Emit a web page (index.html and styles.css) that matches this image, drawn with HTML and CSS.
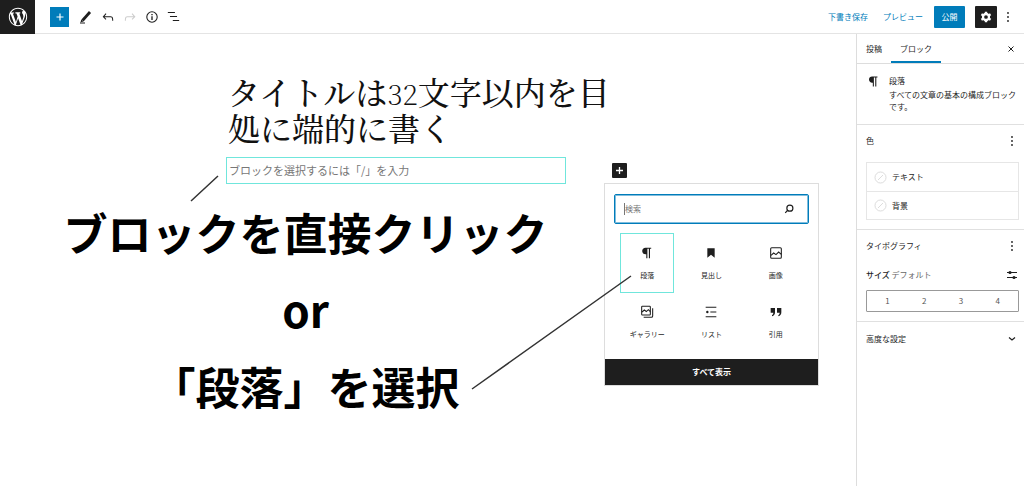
FILE: index.html
```html
<!DOCTYPE html>
<html lang="ja">
<head>
<meta charset="utf-8">
<title>投稿を編集</title>
<link rel="stylesheet" href="styles.css">
</head>
<body>
<header class="topbar">
  <a class="logo" href="#" aria-label="WordPress">
    <svg viewBox="-2 -2 24 24" width="22" height="22" fill="#fff"><path d="M20 10c0-5.51-4.49-10-10-10C4.48 0 0 4.49 0 10c0 5.52 4.48 10 10 10 5.51 0 10-4.48 10-10zM7.78 15.37L4.37 6.22c.55-.02 1.17-.08 1.17-.08.5-.06.44-1.13-.06-1.11 0 0-1.45.11-2.37.11-.18 0-.37 0-.58-.01C4.12 2.69 6.87 1.11 10 1.11c2.33 0 4.45.87 6.05 2.34-.68-.11-1.65.39-1.65 1.58 0 .74.45 1.36.9 2.1.35.61.55 1.36.55 2.46 0 1.49-1.4 5-1.4 5l-3.03-8.37c.54-.02.82-.17.82-.17.5-.05.44-1.25-.06-1.22 0 0-1.44.12-2.38.12-.87 0-2.33-.12-2.33-.12-.5-.03-.56 1.2-.06 1.22l.92.08 1.26 3.41zM17.41 10c.24-.64.74-1.87.43-4.25.7 1.29 1.05 2.71 1.05 4.25 0 3.29-1.73 6.24-4.4 7.78.97-2.59 1.94-5.2 2.92-7.78zM6.1 18.09C3.12 16.65 1.11 13.53 1.11 10c0-1.3.23-2.48.72-3.59C3.25 10.3 4.67 14.2 6.1 18.09zm4.03-6.63l2.58 6.98c-.86.29-1.76.45-2.71.45-.79 0-1.57-.11-2.29-.33.81-2.38 1.62-4.74 2.42-7.1z"/></svg>
  </a>
  <div class="tools">
    <button class="icon-btn primary" aria-label="ブロックを追加"><svg viewBox="0 0 24 24" width="14" height="14"><path d="M12 6v12M6 12h12" stroke="#fff" stroke-width="2"/></svg></button>
    <button class="icon-btn" aria-label="編集"><svg viewBox="0 0 16 16" width="16" height="16"><path d="M4.500 11.500L12 3" stroke="currentColor" stroke-width="2.800"/><path d="M3.300 10.500l2.200 2-3 .8zM2 13.600h5v1H2z"/></svg></button>
    <button class="icon-btn" aria-label="元に戻す"><svg viewBox="0 0 24 24" width="16" height="16"><path d="M18.3 11.700c-.6-.6-1.400-.9-2.300-.9H6.700l2.900-3.300-1.100-1-4.500 5L8.500 16l1-1-2.700-2.700H16c.5 0 .9.200 1.300.5 1 1 1 3.400 1 4.500v.3h1.500v-.2c0-1.500 0-4.300-1.500-5.700z"/></svg></button>
    <button class="icon-btn faded" aria-label="やり直す" disabled><svg viewBox="0 0 24 24" width="16" height="16"><path d="M15.600 6.500l-1.100 1 2.900 3.300H8c-.9 0-1.700.3-2.300.9-1.400 1.500-1.400 4.200-1.400 5.600v.2h1.500v-.3c0-1.100 0-3.500 1-4.500.3-.3.7-.5 1.300-.5h9.200L14.500 15l1.100 1.100 4.600-4.600-4.600-5z"/></svg></button>
    <button class="icon-btn" aria-label="詳細"><svg viewBox="0 0 24 24" width="16" height="16"><circle cx="12" cy="12" r="7.800" fill="none" stroke="currentColor" stroke-width="1.600"/><path d="M11 11h2v5.500h-2zM11 7.500h2v2h-2z"/></svg></button>
    <button class="icon-btn" aria-label="リスト表示"><svg viewBox="0 0 24 24" width="17" height="17"><path d="M4 5.500h10V7H4zM7 11.200h10v1.500H7zM11 17h9v1.500h-9z"/></svg></button>
  </div>
  <div class="actions">
    <button class="text-btn">下書き保存</button>
    <button class="text-btn">プレビュー</button>
    <button class="publish">公開</button>
    <button class="icon-btn dark" aria-label="設定"><svg viewBox="0 0 24 24" width="16" height="16"><circle cx="12" cy="12" r="4.500" fill="none" stroke="#fff" stroke-width="3.400"/><path d="M12 4v3M12 17v3M5.100 8l2.600 1.500M16.300 14.500l2.600 1.500M5.100 16l2.600-1.500M16.300 9.500L18.900 8" stroke="#fff" stroke-width="3.600"/></svg></button>
    <button class="more" aria-label="オプション"><svg viewBox="0 0 4 12" width="4" height="12"><circle cx="2" cy="2" r=".9"/><circle cx="2" cy="6" r=".9"/><circle cx="2" cy="10" r=".9"/></svg></button>
  </div>
</header>
<div class="workspace">
  <main class="canvas">
    <div class="writing">
      <h1 class="post-title">タイトルは<span class="figures">32</span>文字以内を目処に端的に書く</h1>
      <div class="block-row">
        <input class="paragraph" type="text" aria-label="段落ブロック" placeholder="ブロックを選択するには「/」を入力">
        <button class="appender" aria-label="ブロックを追加"><svg viewBox="0 0 15 15" width="15" height="15"><path d="M7.500 4v7M4 7.500h7" stroke="#fff" stroke-width="1.300"/></svg></button>
        <section class="inserter" aria-label="ブロック一覧">
          <div class="search">
            <input type="search" aria-label="検索" placeholder="検索">
            <svg viewBox="0 0 24 24" width="14" height="14"><circle cx="13.500" cy="10.500" r="5.200" fill="none" stroke="#1e1e1e" stroke-width="2"/><path d="M9.800 14.200L5.500 18.500" stroke="#1e1e1e" stroke-width="2"/></svg>
          </div>
          <div class="tiles">
            <button class="tile selected"><svg viewBox="0 0 24 24" width="16" height="16"><path d="M18.300 4H9.900C7 3.900 4.800 6 4.800 8.900s2.200 5 5.100 5h1V20h1.700V5.500h2.200V20h1.700V5.500h1.800z"/></svg>段落</button>
            <button class="tile"><svg viewBox="0 0 24 24" width="16" height="16"><path d="M6.500 5h11v14L12 14.500 6.500 19z"/></svg>見出し</button>
            <button class="tile"><svg viewBox="0 0 24 24" width="16" height="16" fill="none" stroke="currentColor" stroke-width="1.600"><rect x="4" y="4" width="16" height="16" rx="1.500"/><path d="M4.500 15.500l4-3.500 3.500 2.500 4-4 4 3.500"/></svg>画像</button>
            <button class="tile"><svg viewBox="0 0 24 24" width="16" height="16" fill="none" stroke="currentColor" stroke-width="1.600"><rect x="4" y="3.500" width="13" height="13" rx="1"/><path d="M4.500 12l3.500-3 3 2.300L14 8.500l3 3M20.500 6.500V18c0 1-.8 2-2 2H7"/></svg>ギャラリー</button>
            <button class="tile"><svg viewBox="0 0 24 24" width="16" height="16"><path d="M4 4h16v1.600H4zM11 11.200h9v1.600h-9zM4 18.400h16V20H4z"/><circle cx="6.500" cy="12" r="1.800"/></svg>リスト</button>
            <button class="tile"><svg viewBox="0 0 24 24" width="16" height="16"><path d="M4 6h6.500v6.500c0 3-1.500 5.200-4.500 6v-2c1.500-.7 2-2 2-3.500H4zM13.500 6H20v6.500c0 3-1.500 5.200-4.500 6v-2c1.500-.7 2-2 2-3.500h-4z"/></svg>引用</button>
          </div>
          <button class="show-all">すべて表示</button>
        </section>
      </div>
    </div>
    <div class="note"><p>ブロックを直接クリック</p><p>or</p><p>「段落」を選択</p></div>
    <svg class="pointers" viewBox="0 0 856 452" width="856" height="452" fill="none" stroke="#333" stroke-width="1.500"><path d="M191 167l27-25M472 355l159-113"/></svg>
  </main>
  <aside class="sidebar">
    <div class="tabs">
      <button class="tab">投稿</button>
      <button class="tab active">ブロック</button>
      <button class="close" aria-label="閉じる"><svg viewBox="0 0 8 8" width="8" height="8"><path d="M1.500 1.500l5 5M6.500 1.500l-5 5" stroke="currentColor"/></svg></button>
    </div>
    <section class="card">
      <svg viewBox="0 0 24 24" width="15" height="15"><path d="M18.300 4H9.900C7 3.900 4.800 6 4.800 8.900s2.200 5 5.100 5h1V20h1.700V5.500h2.200V20h1.700V5.500h1.800z"/></svg>
      <div><h2>段落</h2><p>すべての文章の基本の構成ブロックです。</p></div>
    </section>
    <section class="panel">
      <div class="panel-head"><h2>色</h2><button class="more" aria-label="色オプション"><svg viewBox="0 0 4 12" width="4" height="12"><circle cx="2" cy="2" r=".9"/><circle cx="2" cy="6" r=".9"/><circle cx="2" cy="10" r=".9"/></svg></button></div>
      <div class="colors">
        <button><svg viewBox="0 0 13 13" width="13" height="13" fill="none" stroke="#ddd"><circle cx="6.500" cy="6.500" r="5.500"/><path d="M4 9l5-5"/></svg>テキスト</button>
        <button><svg viewBox="0 0 13 13" width="13" height="13" fill="none" stroke="#ddd"><circle cx="6.500" cy="6.500" r="5.500"/><path d="M4 9l5-5"/></svg>背景</button>
      </div>
    </section>
    <section class="panel">
      <div class="panel-head"><h2>タイポグラフィ</h2><button class="more" aria-label="タイポグラフィオプション"><svg viewBox="0 0 4 12" width="4" height="12"><circle cx="2" cy="2" r=".9"/><circle cx="2" cy="6" r=".9"/><circle cx="2" cy="10" r=".9"/></svg></button></div>
      <div class="size-head"><span><b>サイズ</b> デフォルト</span><button aria-label="カスタムサイズ"><svg viewBox="0 0 12 10" width="12" height="10"><path d="M1 2.500h10M1 7.500h10" stroke="currentColor" stroke-width="1.200"/><circle cx="4" cy="2.500" r="1.600"/><circle cx="8" cy="7.500" r="1.600"/></svg></button></div>
      <div class="sizes"><button>1</button><button>2</button><button>3</button><button>4</button></div>
    </section>
    <button class="advanced">高度な設定<svg viewBox="0 0 8 6" width="8" height="6"><path d="M1 1.500l3 2.500 3-2.500" fill="none" stroke="currentColor" stroke-width="1.200"/></svg></button>
  </aside>
</div>
</body>
</html>
```
FILE: styles.css
```css
* { box-sizing: border-box; }
body {
  margin: 0;
  min-height: 100vh;
  display: flex;
  flex-direction: column;
  background: #fff;
  color: #1e1e1e;
  font: 8px/12px "Noto Sans CJK JP", sans-serif;
}
h1, h2, p { margin: 0; }
h2 { font-size: 8px; font-weight: 400; }
button {
  border: 0;
  padding: 0;
  background: none;
  color: inherit;
  font: inherit;
}
svg { display: block; flex: none; }
svg:not([fill]) { fill: currentColor; }

.topbar {
  display: flex;
  align-items: center;
  height: 34px;
  border-bottom: 1px solid #e4e4e4;
}
.logo {
  display: grid;
  place-items: center;
  width: 35px;
  height: 34px;
  background: #1e1e1e;
}
.tools, .actions { display: flex; align-items: center; height: 30px; }
.tools { gap: 3px; padding-left: 15px; }
.icon-btn { display: grid; place-items: center; width: 19px; height: 20px; }
.primary { background: #007cba; }
.tools .primary { margin-right: 4px; }
.faded { color: #ccc; }
.actions { margin-left: auto; padding-right: 14px; }
.text-btn { margin-right: 15px; color: #007cba; }
.text-btn + .text-btn { margin-right: 11px; }
.publish { width: 31px; height: 22px; background: #007cba; color: #fff; border-radius: 1px; margin-right: 10px; }
.dark { width: 22px; height: 22px; background: #1e1e1e; border-radius: 1px; margin-right: 9px; }

.workspace { display: flex; flex: 1; }
.canvas { position: relative; flex: 1; min-width: 0; padding-top: 39px; }
.writing { max-width: 404px; margin: 0 auto; }
.post-title {
  padding: 0 10px 0 2px;
  color: #111;
  font: 500 32px/36px "Noto Serif CJK JP", "Liberation Serif", serif;
}
.figures { font-size: 28px; font-weight: 200; line-height: 1; }
.block-row {
  position: relative;
  display: flex;
  align-items: center;
  gap: 46px;
  margin-top: 12px;
  padding-right: 3px;
}
.paragraph {
  flex: 1;
  min-width: 0;
  height: 27px;
  padding: 0 2px 2px;
  border: 1px solid #70e6dc;
  outline: 0;
  background: #fff;
  color: #1e1e1e;
  font: 11px/20px "Noto Sans CJK JP", sans-serif;
}
.paragraph::placeholder { color: #777; opacity: 1; }
.appender { background: #1e1e1e; border-radius: 1px; }
.inserter {
  position: absolute;
  z-index: 2;
  left: 378px;
  top: 26px;
  width: 215px;
  border: 1px solid #ddd;
  background: #fff;
}
.search {
  display: flex;
  align-items: center;
  height: 30px;
  margin: 10px 9px;
  padding: 0 12px 0 9px;
  border: 1px solid #007cba;
  border-radius: 2px;
  box-shadow: inset 0 0 0 1px #80bddd;
}
.search input {
  flex: 1;
  min-width: 0;
  height: 12px;
  padding: 0;
  border: 0;
  border-left: 1px solid #777;
  outline: 0;
  font: inherit;
}
.search input::placeholder { color: #757575; opacity: 1; }
.tiles { display: grid; grid-template-columns: repeat(3, 1fr); padding: 0 10px; margin-bottom: 8px; }
.tile {
  display: flex;
  flex-direction: column;
  align-items: center;
  justify-content: center;
  gap: 8px;
  height: 58px;
  margin: 0 5px;
  border: 1px solid transparent;
  font-size: 7px;
  white-space: nowrap;
}
.tile.selected { border-color: #70e6dc; height: 60px; margin-top: -1px; }
.show-all { display: block; width: 100%; height: 26px; background: #1e1e1e; color: #fff; font-weight: 700; }

.note {
  max-width: 611px;
  margin-top: 10px;
  color: #000;
  text-align: center;
  font: 700 44px/77px "Noto Sans CJK JP", sans-serif;
}
.pointers { position: absolute; z-index: 3; left: 0; top: 0; pointer-events: none; }

.sidebar { width: 168px; border-left: 1px solid #ddd; }
.tabs { display: flex; height: 30px; border-bottom: 1px solid #ddd; }
.tab { padding: 0 9px; }
.tab.active { padding-top: 2px; border-bottom: 2px solid #007cba; }
.close { margin-left: auto; padding-right: 9px; }
.card { display: flex; gap: 8px; padding: 10px 5px 11px 9px; border-bottom: 1px solid #e0e0e0; }
.card h2 { line-height: 13px; margin-bottom: 2px; }
.panel { padding: 10px 5px 9px 9px; border-bottom: 1px solid #e0e0e0; }
.panel-head { display: flex; justify-content: space-between; align-items: center; padding-right: 5px; }
.colors { margin-top: 15px; border: 1px solid #e6e6e6; }
.colors button { display: flex; align-items: center; gap: 5px; width: 100%; height: 28px; padding-left: 7px; }
.colors button + button { border-top: 1px solid #e6e6e6; }
.size-head { display: flex; justify-content: space-between; align-items: center; margin: 17px 1px 9px 0; color: #666; }
.size-head b { color: #1e1e1e; font-weight: 500; }
.size-head button { color: #1e1e1e; }
.sizes { display: grid; grid-template-columns: repeat(4, 1fr); height: 22px; padding: 0 2px; border: 1px solid #999; border-radius: 1px; color: #555; }
.advanced { display: flex; justify-content: space-between; align-items: center; width: 100%; height: 33px; padding: 0 8px 0 9px; }
```
